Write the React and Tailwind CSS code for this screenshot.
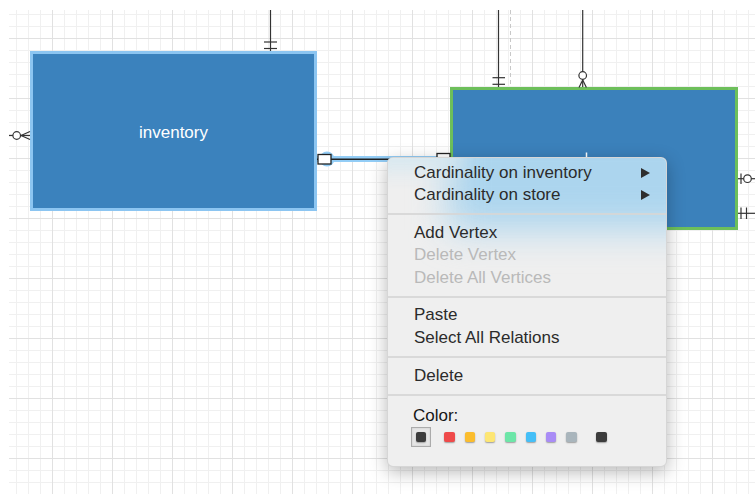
import React from 'react';

// Swatches shown in the color row of the edge menu
const SWATCHES = ['#ef4a4a', '#fbbd2e', '#fde674', '#6de6a8', '#45bff7', '#a98cf6', '#a9b5bc'];

// Little right-pointing arrow for submenu rows
const SubArrow = () => (
  <svg width="9" height="10" viewBox="0 0 9 10" className="ml-auto mr-[16px]">
    <polygon points="0,0 9,5 0,10" fill="#2e2e2e" />
  </svg>
);

const MenuItem = ({ label, disabled, submenu }) => (
  <div
    className={`relative flex items-center h-[22.6px] pl-[26px] text-[17px] leading-[22.6px] ${
      disabled ? 'text-[#b9b9b9]' : 'text-[#2b2b2b]'
    }`}
  >
    <span>{label}</span>
    {submenu && <SubArrow />}
  </div>
);

const Separator = () => (
  <div className="relative h-[15px] flex items-center">
    <div className="h-[2px] w-full bg-[#d6d6d6]/90" />
  </div>
);

const Swatch = ({ color }) => (
  <div className="w-[20.33px] flex justify-center">
    <div
      className="w-[10.5px] h-[10.5px] rounded-[2px] shadow-[0_1px_1.5px_rgba(0,0,0,0.35)]"
      style={{ backgroundColor: color }}
    />
  </div>
);

function ContextMenu() {
  return (
    <div className="absolute left-[387px] top-[157px] w-[280px] h-[310px] rounded-[6px] pt-[3.5px] bg-[#efefef] border border-black/10 shadow-[0_5px_18px_rgba(0,0,0,0.28)] overflow-hidden">
      {/* tint of the blue entity seen through the menu */}
      <div className="absolute left-[60px] top-[-40px] w-[260px] h-[112px] bg-[#acd5ee] blur-[18px]" />
      <div className="absolute left-[-20px] top-[-12px] w-[90px] h-[24px] bg-[#d5e7f0] blur-[10px]" />
      <MenuItem label="Cardinality on inventory" submenu />
      <MenuItem label="Cardinality on store" submenu />
      <Separator />
      <MenuItem label="Add Vertex" />
      <MenuItem label="Delete Vertex" disabled />
      <MenuItem label="Delete All Vertices" disabled />
      <Separator />
      <MenuItem label="Paste" />
      <MenuItem label="Select All Relations" />
      <Separator />
      <MenuItem label="Delete" />
      <Separator />
      <div className="h-[24.6px] pt-[3px] pl-[25px] text-[17px] leading-[22.6px] text-[#161616]">Color:</div>
      <div className="flex items-center pl-[23px]">
        <div className="w-[20px] h-[20px] border border-[#ababab] bg-[#e6e6e6] shadow-[inset_0_0_2px_rgba(0,0,0,0.15)] flex items-center justify-center">
          <div className="w-[10.5px] h-[10.5px] rounded-[2px] bg-[#3c3c3c] shadow-[0_1px_1.5px_rgba(0,0,0,0.3)]" />
        </div>
        <div className="flex ml-[8.3px]">
          {SWATCHES.map(c => (
            <Swatch key={c} color={c} />
          ))}
        </div>
        <div className="ml-[9.5px]">
          <Swatch color="#3c3c3c" />
        </div>
      </div>
    </div>
  );
}

export default function App() {
  return (
    <div className="relative w-[755px] h-[494px] overflow-hidden bg-white font-['Liberation_Sans',Arial,sans-serif]">
      {/* grid */}
      <svg className="absolute inset-0" width="755" height="494">
        <defs>
          <pattern id="minor" width="12" height="12" x="4" y="2" patternUnits="userSpaceOnUse">
            <path d="M0.5 0 V12 M0 0.5 H12" fill="none" stroke="#f0f0f0" strokeWidth="1" />
          </pattern>
          <pattern id="major" width="60" height="60" x="52" y="38" patternUnits="userSpaceOnUse">
            <path d="M0.5 0 V60 M0 0.5 H60" fill="none" stroke="#e1e1e1" strokeWidth="1" />
          </pattern>
        </defs>
        <rect x="9" y="10" width="746" height="484" fill="url(#minor)" />
        <rect x="9" y="10" width="746" height="484" fill="url(#major)" />
        {/* alignment guide */}
        <line x1="510.5" y1="10" x2="510.5" y2="87" stroke="#c8c8c8" strokeWidth="1" strokeDasharray="4 3" />
      </svg>

      {/* entities */}
      <div className="absolute left-[30px] top-[51px] w-[287px] h-[160px] border-[3px] border-[#8cc5f1] bg-[#3b82bd] flex items-center justify-center pt-[3px] text-white text-[17px]">
        inventory
      </div>
      <div className="absolute left-[450px] top-[87px] w-[288px] h-[143px] border-[3px] border-[#6dbf5b] bg-[#3b81bb]" />

      {/* relations */}
      <svg className="absolute inset-0 pointer-events-none" width="755" height="494">
        <g stroke="#333" strokeWidth="1.2" fill="none">
          {/* inventory top: one and only one */}
          <line x1="270.5" y1="10" x2="270.5" y2="51" />
          <line x1="264" y1="42" x2="277" y2="42" />
          <line x1="264" y1="48.5" x2="277" y2="48.5" />
          {/* inventory left: zero or many */}
          <line x1="9" y1="135.5" x2="30" y2="135.5" />
          <circle cx="16.7" cy="135.5" r="3.8" fill="white" />
          <path d="M21 135.5 L30 131.5 M21 135.5 L30 139.5" />
          {/* store top left: one and only one */}
          <line x1="498.5" y1="10" x2="498.5" y2="87" />
          <line x1="492.5" y1="77.7" x2="505" y2="77.7" />
          <line x1="492.5" y1="84.3" x2="505" y2="84.3" />
          {/* store top: zero or many */}
          <line x1="582.7" y1="10" x2="582.7" y2="87" />
          <circle cx="582.7" cy="75.5" r="3.8" fill="white" />
          <path d="M582.7 80 L579 87.5 M582.7 80 L586.4 87.5" />
          {/* store right: zero or one */}
          <line x1="738" y1="178.7" x2="755" y2="178.7" />
          <line x1="741" y1="173.5" x2="741" y2="184" />
          <circle cx="747.5" cy="178.7" r="3.8" fill="white" />
          {/* store right bottom: one and only one */}
          <line x1="738" y1="213.3" x2="755" y2="213.3" />
          <line x1="741" y1="207.5" x2="741" y2="219" />
          <line x1="746.5" y1="207.5" x2="746.5" y2="219" />
        </g>
        {/* selected relation */}
        <line x1="317" y1="159" x2="450" y2="159" stroke="#93cdf6" strokeWidth="6" />
        <circle cx="327" cy="159" r="7.5" fill="#93cdf6" />
        <line x1="317" y1="159.3" x2="450" y2="159.3" stroke="#222" strokeWidth="1.5" />
        <rect x="318" y="154.5" width="13" height="9.5" fill="white" stroke="#222" strokeWidth="1.3" />
        <rect x="437" y="153.5" width="13" height="9.5" fill="white" stroke="#222" strokeWidth="1.3" />
        {/* tip of the store label peeking above the menu */}
        <line x1="586.5" y1="152.5" x2="586.5" y2="157" stroke="white" strokeWidth="1.5" />
      </svg>

      <ContextMenu />
    </div>
  );
}
